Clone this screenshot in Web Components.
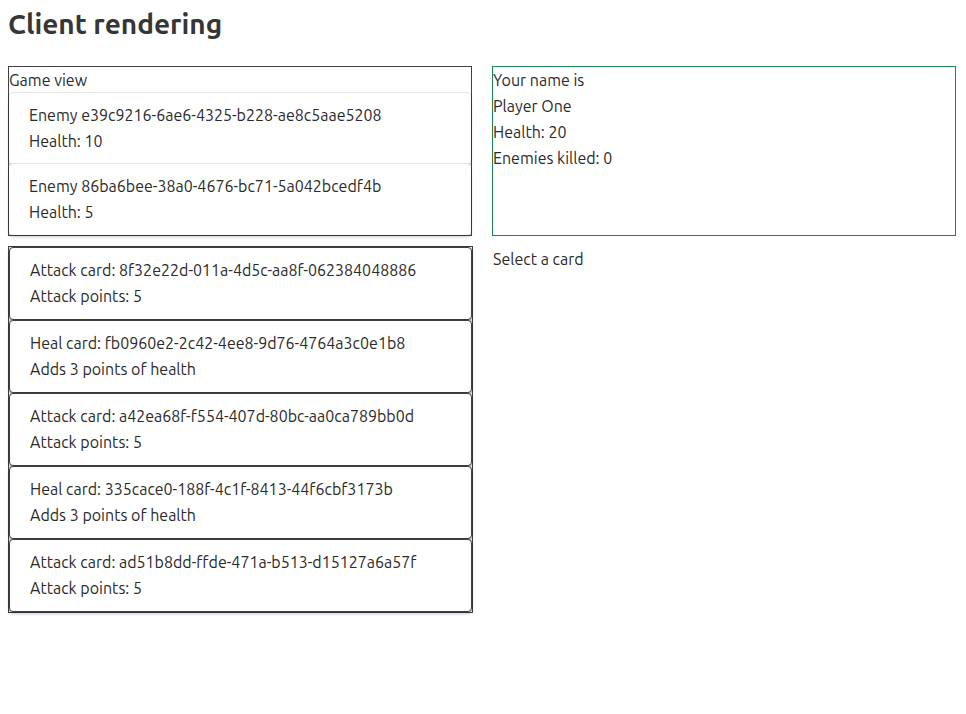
<!DOCTYPE html>
<html lang="en">
<head>
<meta charset="utf-8">
<title>Client rendering</title>
<style>
body{margin:0;background:#fff;color:#2b2b2b;font:16px/26px Ubuntu,"Noto Sans","Open Sans",sans-serif}
</style>
</head>
<body>
<game-app></game-app>
<script>
const define=(name,html)=>customElements.define(name,class extends HTMLElement{
  constructor(){super();this.attachShadow({mode:'open'}).innerHTML=html;}
});
define('game-panel',`<style>
:host{display:block;border:1px solid var(--edge,#404044)}
</style><slot></slot>`);
define('enemy-card',`<style>
:host{display:block;padding:9px 20px 10px;border-radius:4px;background:#fff;
box-shadow:0 2px 3px rgba(10,10,30,.2),0 0 0 1px rgba(10,10,30,.1)}
p{margin:0}
</style><p><slot name="title"></slot></p><p><slot></slot></p>`);
define('hand-card',`<style>
:host{display:block;padding:9px 20px 10px;border:1px solid #404044;border-radius:4px;background:#fff;
box-shadow:0 2px 3px rgba(10,10,30,.2),0 0 0 1px rgba(10,10,30,.1)}
p{margin:0}
</style><p><slot name="title"></slot></p><p><slot></slot></p>`);
define('game-row',`<style>
:host{display:grid;grid-template-columns:minmax(0,1fr) minmax(0,1fr);gap:20px}
</style><slot></slot>`);
define('game-app',`<style>
:host{display:block;padding:8px}
h1{margin:0 0 26px;font-size:28px;line-height:32px;font-weight:600;color:#363636}
main{display:grid;gap:10px}
.board{padding-right:2px}
.player{--edge:#198754}
.hand{align-self:start}
p{margin:0}
</style>
<h1>Client rendering</h1>
<main>
<game-row class="board">
<game-panel><p>Game view</p>
<enemy-card><span slot="title">Enemy e39c9216-6ae6-4325-b228-ae8c5aae5208</span>Health: 10</enemy-card>
<enemy-card><span slot="title">Enemy 86ba6bee-38a0-4676-bc71-5a042bcedf4b</span>Health: 5</enemy-card>
</game-panel>
<game-panel class="player"><p>Your name is</p><p>Player One</p><p>Health: 20</p><p>Enemies killed: 0</p></game-panel>
</game-row>
<game-row>
<game-panel class="hand">
<hand-card><span slot="title">Attack card: 8f32e22d-011a-4d5c-aa8f-062384048886</span>Attack points: 5</hand-card>
<hand-card><span slot="title">Heal card: fb0960e2-2c42-4ee8-9d76-4764a3c0e1b8</span>Adds 3 points of health</hand-card>
<hand-card><span slot="title">Attack card: a42ea68f-f554-407d-80bc-aa0ca789bb0d</span>Attack points: 5</hand-card>
<hand-card><span slot="title">Heal card: 335cace0-188f-4c1f-8413-44f6cbf3173b</span>Adds 3 points of health</hand-card>
<hand-card><span slot="title">Attack card: ad51b8dd-ffde-471a-b513-d15127a6a57f</span>Attack points: 5</hand-card>
</game-panel>
<p>Select a card</p>
</game-row>
</main>`);
</script>
</body>
</html>
